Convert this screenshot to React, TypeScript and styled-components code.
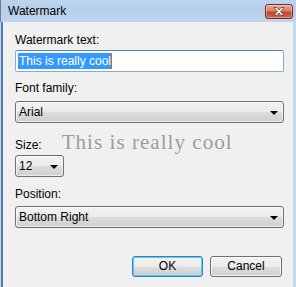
import * as React from 'react'
import styled, { createGlobalStyle } from 'styled-components'

const GlobalStyle = createGlobalStyle`
  html, body {
    margin: 0;
    padding: 0;
    background: #c4d8ee;
  }
  * {
    box-sizing: border-box;
  }
`

const Window = styled.div`
  width: 296px;
  height: 287px;
  display: flex;
  flex-direction: column;
  background: #c4d8ee;
  font-family: 'Liberation Sans', Arial, sans-serif;
  font-size: 12px;
  color: #000;
  overflow: hidden;
`

const TitleBar = styled.div`
  height: 22px;
  flex: none;
  display: flex;
  align-items: center;
  justify-content: space-between;
  padding: 0 3px 0 7px;
  background: linear-gradient(to bottom, #bcd3ec 0%, #b7cfe9 50%, #c0d6ee 100%);
  border-left: 1px solid #6b7f99;
`

const Title = styled.span`
  font-size: 12px;
  line-height: 15px;
  margin-top: 1px;
`

const CloseButton = styled.div`
  width: 28px;
  height: 15px;
  margin-top: 1px;
  border: 1px solid #6e2a2a;
  border-radius: 3px;
  background: linear-gradient(
    to bottom,
    #e9a99a 0%,
    #d9806a 45%,
    #c2432a 55%,
    #d06a50 100%
  );
  box-shadow: inset 0 0 0 1px rgba(255, 255, 255, 0.35);
  display: flex;
  align-items: center;
  justify-content: center;
`

const Body = styled.div`
  flex: 1;
  margin: 0 3px 0 1px;
  border-left: 2px solid #4f7aae;
  background: #f0f0f0;
  padding: 11px 9px 0 12px;
  display: flex;
  flex-direction: column;
`

const Label = styled.div<{ $top: number }>`
  line-height: 15px;
  margin-top: ${(p) => p.$top}px;
`

const Field = styled.div<{ $gap: number }>`
  margin-top: ${(p) => p.$gap}px;
`

const TextBox = styled.div`
  height: 22px;
  background: #fff;
  border: 1px solid #84acd6;
  border-top-color: #5586c0;
  border-radius: 2px;
  padding: 2px 2px;
  display: flex;
  align-items: center;
`

const Selected = styled.span`
  background: #3399ff;
  color: #fff;
  line-height: 16px;
  padding: 0 0 0 1px;
`

const Caret = styled.span`
  width: 1px;
  height: 16px;
  background: #c86a14;
`

const Select = styled.div<{ $width?: number }>`
  width: ${(p) => (p.$width ? `${p.$width}px` : '100%')};
  height: 22px;
  border: 1px solid #707070;
  border-radius: 3px;
  background: linear-gradient(
    to bottom,
    #f2f2f2 0%,
    #ebebeb 50%,
    #dddddd 51%,
    #cfcfcf 100%
  );
  box-shadow: inset 0 0 0 1px rgba(255, 255, 255, 0.6);
  display: flex;
  align-items: center;
  justify-content: space-between;
  padding: 0 5px 0 3px;
`

const Arrow = styled.span`
  width: 0;
  height: 0;
  border-left: 4px solid transparent;
  border-right: 4px solid transparent;
  border-top: 4px solid #000;
  margin-top: 1px;
`

const SizeRow = styled.div`
  display: flex;
  align-items: baseline;
  margin-top: 12px;
`

const SizeLabel = styled.div`
  line-height: 15px;
`

const Preview = styled.div`
  margin-left: 20px;
  font-family: 'Liberation Serif', 'Times New Roman', serif;
  font-size: 21px;
  letter-spacing: 1.05px;
  line-height: 15px;
  color: #9c9c9c;
  white-space: nowrap;
`

const ButtonRow = styled.div`
  display: flex;
  justify-content: flex-end;
  gap: 7px;
  margin-top: 28px;
  padding-right: 2px;
`

const Button = styled.div<{ $default?: boolean }>`
  width: ${(p) => (p.$default ? 71 : 72)}px;
  height: 21px;
  border: 1px solid ${(p) => (p.$default ? '#3c7fb1' : '#707070')};
  border-radius: 3px;
  background: linear-gradient(
    to bottom,
    #f2f2f2 0%,
    #ebebeb 50%,
    #dddddd 51%,
    #cfcfcf 100%
  );
  box-shadow: inset 0 0 0 1px
    ${(p) => (p.$default ? '#48d4fb' : 'rgba(255, 255, 255, 0.7)')};
  display: flex;
  align-items: center;
  justify-content: center;
  line-height: 15px;
`

const CloseGlyph = () => (
  <svg width="12" height="9" viewBox="0 0 12 9">
    <path
      d="M1 0.5 L4 0.5 L6 3 L8 0.5 L11 0.5 L7.5 4.5 L11 8.5 L8 8.5 L6 6 L4 8.5 L1 8.5 L4.5 4.5 Z"
      fill="#fff"
      stroke="#6a3b35"
      strokeWidth="0.8"
    />
  </svg>
)

const App: React.FC = () => (
  <>
    <GlobalStyle />
    <Window>
      <TitleBar>
        <Title>Watermark</Title>
        <CloseButton>
          <CloseGlyph />
        </CloseButton>
      </TitleBar>
      <Body>
        <Label $top={0}>Watermark text:</Label>
        <Field $gap={2}>
          <TextBox>
            <Selected>This is really cool</Selected>
            <Caret />
          </TextBox>
        </Field>

        <Label $top={9}>Font family:</Label>
        <Field $gap={5}>
          <Select>
            <span>Arial</span>
            <Arrow />
          </Select>
        </Field>

        <SizeRow>
          <SizeLabel>Size:</SizeLabel>
          <Preview>This is really cool</Preview>
        </SizeRow>
        <Field $gap={2}>
          <Select $width={49}>
            <span>12</span>
            <Arrow />
          </Select>
        </Field>

        <Label $top={10}>Position:</Label>
        <Field $gap={4}>
          <Select>
            <span>Bottom Right</span>
            <Arrow />
          </Select>
        </Field>

        <ButtonRow>
          <Button $default>OK</Button>
          <Button>Cancel</Button>
        </ButtonRow>
      </Body>
    </Window>
  </>
)

export default App
